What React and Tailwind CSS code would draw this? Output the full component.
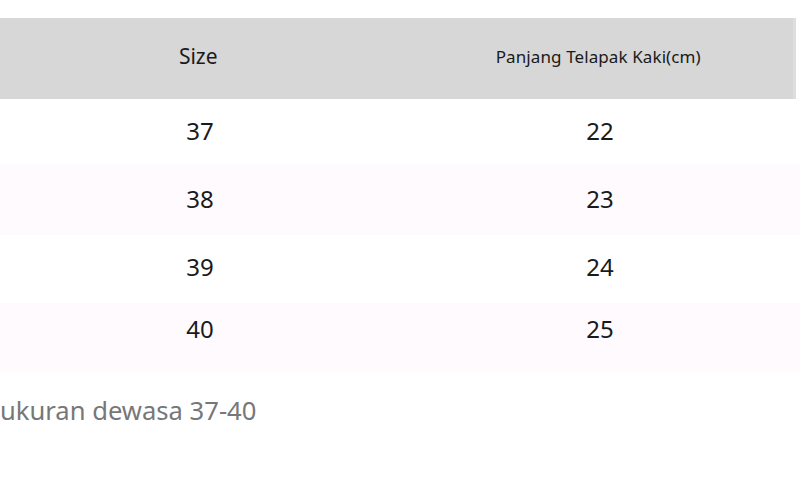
export default function App() {
  const rows = [
    ['37', '22', 'h-[65px] pb-[1px]'],
    ['38', '23', 'h-[71px] pb-[1px]'],
    ['39', '24', 'h-[68px] pb-[4px]'],
    ['40', '25', 'h-[69px] pb-[17px]'],
  ];

  return (
    <div className="w-[800px] h-[501px] bg-white overflow-hidden text-[#1a1a1a]" style={{ fontFamily: '"Noto Sans", "Open Sans", sans-serif' }}>
      <div className="pt-[18px]">
        <div className="grid grid-cols-2 h-[81px] w-[796px] bg-[#d7d7d7] border-r-[3px] border-[#dedede] pb-[4px]">
          <div className="flex items-center justify-center text-[21px]">Size</div>
          <div className="flex items-center justify-center text-[17px] pl-[7px] tracking-[0.1px]">Panjang Telapak Kaki(cm)</div>
        </div>
        {rows.map((r, i) => (
          <div
            key={r[0]}
            className={`grid grid-cols-2 ${r[2]} ${i % 2 === 1 ? 'bg-[#fefafd]' : 'bg-white'}`}
          >
            <div className="flex items-center justify-center text-[24px]">{r[0]}</div>
            <div className="flex items-center justify-center text-[24px]">{r[1]}</div>
          </div>
        ))}
        <p className="mt-[22px] text-[25.6px] leading-[34px] text-[#777777]">ukuran dewasa 37-40</p>
      </div>
    </div>
  );
}
